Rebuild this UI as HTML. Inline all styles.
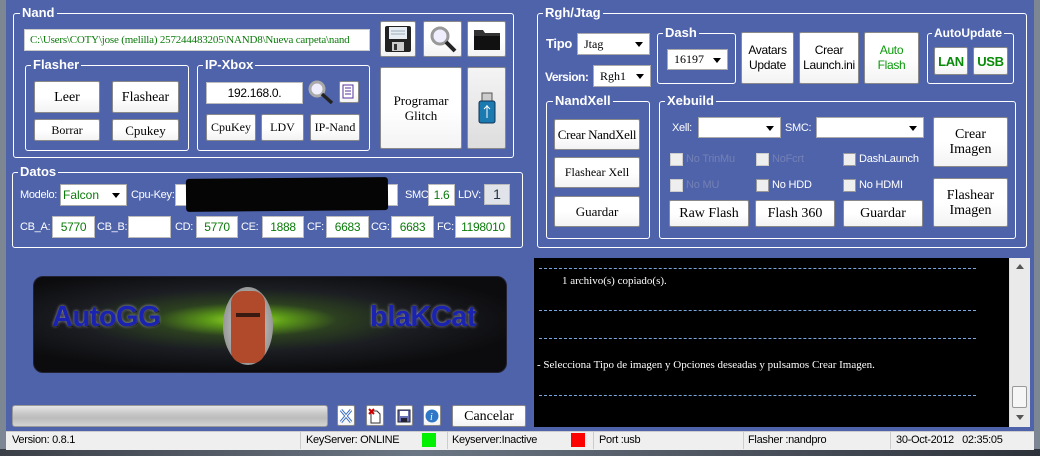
<!DOCTYPE html>
<html><head><meta charset="utf-8"><style>
*{box-sizing:border-box;margin:0;padding:0}
body{width:1040px;height:456px;overflow:hidden;background:#7d8794;position:relative;font-family:"Liberation Sans",sans-serif;font-size:12px}
.a{position:absolute}
.g{position:absolute;border:1px solid #fff;border-radius:3px}
.gl{position:absolute;color:#fff;font-weight:bold;font-size:13px;background:#4f63ab;padding:0 2px;line-height:14px}
.b{position:absolute;background:linear-gradient(#fff,#fff 50%,#f3f3f3);border:1px solid #8a8a8a;border-radius:2px;display:flex;align-items:center;justify-content:center;text-align:center;font-family:"Liberation Serif",serif;font-size:13px;color:#000;line-height:15px}
.s{font-family:"Liberation Sans",sans-serif;letter-spacing:-0.3px}
.i{position:absolute;background:#fff;border:1px solid #bbb;color:#0a7a0a;font-size:12px;letter-spacing:-0.3px;display:flex;align-items:center;justify-content:center}
.l{position:absolute;color:#fff;font-size:11px;letter-spacing:-0.3px;line-height:14px}
.sel{position:absolute;background:#fff;border:1px solid #aaa;font-size:12px;padding-left:6px;display:flex;align-items:center}
.sel:after{content:"";position:absolute;right:6px;top:50%;margin-top:-2px;border:4px solid transparent;border-top:5px solid #000;border-bottom:0}
.cb{position:absolute;width:13px;height:13px;background:#eee;border:1px solid #999}
.cl{position:absolute;font-size:11px;letter-spacing:-0.2px;line-height:14px}
.st{position:absolute;top:432px;font-size:11px;letter-spacing:-0.3px;line-height:17px;color:#000}
.dl{position:absolute;left:5px;width:437px;border-top:1px dashed #7aa8e0}
</style></head><body>
<div class="a" style="left:6px;top:0;width:1028px;height:431px;background:#4f63ab"></div>
<div class="a" style="left:0;top:449px;width:1040px;height:7px;background:linear-gradient(90deg,#3b3f47,#6b7684 40%,#2e323a)"></div>

<!-- Nand -->
<div class="g" style="left:13px;top:13px;width:501px;height:145px"></div>
<div class="gl" style="left:20px;top:6px">Nand</div>
<div class="a" style="left:24px;top:29px;width:346px;height:22px;background:#fff;border:1px solid #ccc;font-family:'Liberation Serif',serif;color:#0a7a0a;font-size:11px;letter-spacing:-0.2px;line-height:20px;padding-left:5px;white-space:nowrap;overflow:hidden">C:\Users\COTY\jose (melilla) 257244483205\NAND8\Nueva carpeta\nand</div>
<div class="b" style="left:380px;top:21px;width:36px;height:36px">
<svg width="28" height="28" viewBox="0 0 28 28"><rect x="1" y="1" width="26" height="26" rx="2" fill="#222"/><rect x="5" y="2" width="18" height="12" fill="#e8edf3"/><line x1="7" y1="6" x2="21" y2="6" stroke="#9ab"/><line x1="7" y1="9" x2="21" y2="9" stroke="#9ab"/><rect x="8" y="17" width="12" height="9" fill="#ccc"/><rect x="10" y="19" width="3" height="6" fill="#333"/></svg></div>
<div class="b" style="left:423px;top:21px;width:39px;height:36px">
<svg width="30" height="30" viewBox="0 0 30 30"><circle cx="12" cy="12" r="8" fill="#eef" stroke="#999" stroke-width="3"/><line x1="18" y1="18" x2="27" y2="27" stroke="#222" stroke-width="4"/></svg></div>
<div class="b" style="left:467px;top:21px;width:39px;height:36px">
<svg width="30" height="26" viewBox="0 0 30 26"><path d="M2 4h9l2 3h15v17H2z" fill="#333"/><path d="M2 10h26v14H2z" fill="#111"/></svg></div>

<div class="g" style="left:25px;top:65px;width:164px;height:86px"></div>
<div class="gl" style="left:31px;top:58px">Flasher</div>
<div class="b" style="left:34px;top:81px;width:66px;height:32px;font-size:14px">Leer</div>
<div class="b" style="left:112px;top:81px;width:67px;height:32px;font-size:14px">Flashear</div>
<div class="b" style="left:34px;top:119px;width:66px;height:22px;font-size:12px">Borrar</div>
<div class="b" style="left:112px;top:119px;width:67px;height:22px">Cpukey</div>

<div class="g" style="left:197px;top:65px;width:173px;height:86px"></div>
<div class="gl" style="left:203px;top:58px">IP-Xbox</div>
<div class="i" style="left:206px;top:82px;width:97px;height:22px;color:#000;font-size:12px">192.168.0.</div>
<svg class="a" style="left:307px;top:79px" width="27" height="26" viewBox="0 0 27 26"><circle cx="10" cy="10" r="7" fill="#eef" stroke="#aaa" stroke-width="3"/><line x1="15" y1="15" x2="25" y2="24" stroke="#222" stroke-width="3.5"/></svg>
<div class="b" style="left:339px;top:81px;width:20px;height:22px"><svg width="14" height="16" viewBox="0 0 14 16"><rect x="1" y="1" width="10" height="13" fill="#fff" stroke="#539"/><path d="M3 4h6M3 7h6M3 10h6" stroke="#539"/></svg></div>
<div class="b" style="left:206px;top:114px;width:50px;height:27px;font-size:12px">CpuKey</div>
<div class="b" style="left:261px;top:114px;width:43px;height:27px;font-size:12px">LDV</div>
<div class="b" style="left:310px;top:114px;width:50px;height:27px;font-size:12px">IP-Nand</div>

<div class="b" style="left:380px;top:67px;width:82px;height:82px">Programar<br>Glitch</div>
<div class="b" style="left:467px;top:67px;width:39px;height:82px;background:linear-gradient(#f4f4f4,#ddd)"><svg width="18" height="34" viewBox="0 0 18 34"><rect x="4" y="2" width="10" height="9" fill="#ccc" stroke="#555"/><rect x="1" y="10" width="16" height="22" rx="2" fill="#1b7ab0" stroke="#135"/><path d="M9 14v13M6 18l3-3 3 3" stroke="#fff" fill="none"/></svg></div>

<!-- Datos -->
<div class="g" style="left:12px;top:172px;width:511px;height:76px"></div>
<div class="gl" style="left:18px;top:165px">Datos</div>
<div class="l" style="left:20px;top:188px">Modelo:</div>
<div class="sel" style="left:60px;top:184px;width:67px;height:22px;color:#0a7a0a;font-size:12px;padding-left:2px">Falcon</div>
<div class="l" style="left:131px;top:188px">Cpu-Key:</div>
<div class="i" style="left:175px;top:184px;width:223px;height:22px"></div>
<div class="a" style="left:186px;top:178px;width:202px;height:33px;background:#050505;border-radius:3px;transform:rotate(-0.5deg)"></div>
<div class="l" style="left:405px;top:188px">SMC:</div>
<div class="i" style="left:428px;top:184px;width:27px;height:22px">1.6</div>
<div class="l" style="left:458px;top:188px">LDV:</div>
<div class="a" style="left:484px;top:184px;width:26px;height:21px;background:#e0e4ea;border:1px solid #bbb;color:#234;text-align:center;font-size:14px;line-height:19px">1</div>
<div class="l" style="left:20px;top:220px">CB_A:</div>
<div class="i" style="left:52px;top:216px;width:43px;height:22px">5770</div>
<div class="l" style="left:97px;top:220px">CB_B:</div>
<div class="i" style="left:128px;top:216px;width:43px;height:22px"></div>
<div class="l" style="left:175px;top:220px">CD:</div>
<div class="i" style="left:196px;top:216px;width:42px;height:22px">5770</div>
<div class="l" style="left:241px;top:220px">CE:</div>
<div class="i" style="left:262px;top:216px;width:42px;height:22px">1888</div>
<div class="l" style="left:307px;top:220px">CF:</div>
<div class="i" style="left:326px;top:216px;width:43px;height:22px">6683</div>
<div class="l" style="left:371px;top:220px">CG:</div>
<div class="i" style="left:391px;top:216px;width:43px;height:22px">6683</div>
<div class="l" style="left:437px;top:220px">FC:</div>
<div class="i" style="left:455px;top:216px;width:56px;height:22px">1198010</div>

<!-- Rgh/Jtag -->
<div class="g" style="left:537px;top:13px;width:490px;height:235px"></div>
<div class="gl" style="left:543px;top:6px">Rgh/Jtag</div>
<div class="l" style="left:546px;top:37px;font-weight:bold;font-size:13px">Tipo</div>
<div class="sel" style="left:577px;top:33px;width:73px;height:22px;font-family:'Liberation Serif',serif">Jtag</div>
<div class="l" style="left:545px;top:70px;font-weight:bold;font-size:12px;letter-spacing:-0.5px">Version:</div>
<div class="sel" style="left:593px;top:65px;width:58px;height:22px;font-family:'Liberation Serif',serif">Rgh1</div>

<div class="g" style="left:657px;top:33px;width:79px;height:51px"></div>
<div class="gl" style="left:663px;top:26px">Dash</div>
<div class="sel" style="left:667px;top:49px;width:61px;height:21px;font-family:'Liberation Serif',serif">16197</div>
<div class="b s" style="left:741px;top:32px;width:53px;height:52px;font-size:12px">Avatars<br>Update</div>
<div class="b s" style="left:799px;top:32px;width:60px;height:52px;font-size:12px">Crear<br>Launch.ini</div>
<div class="b s" style="left:864px;top:32px;width:55px;height:52px;font-size:12px;color:#0a9a0a">Auto<br>Flash</div>

<div class="g" style="left:927px;top:33px;width:87px;height:51px"></div>
<div class="gl" style="left:932px;top:26px;font-size:12px">AutoUpdate</div>
<div class="b s" style="left:934px;top:47px;width:34px;height:28px;color:#0a8a0a;font-weight:bold;font-size:13px">LAN</div>
<div class="b s" style="left:973px;top:47px;width:35px;height:28px;color:#0a8a0a;font-weight:bold;font-size:13px">USB</div>

<div class="g" style="left:546px;top:101px;width:104px;height:138px"></div>
<div class="gl" style="left:553px;top:94px">NandXell</div>
<div class="b" style="left:554px;top:119px;width:86px;height:31px;letter-spacing:-0.3px">Crear NandXell</div>
<div class="b" style="left:554px;top:157px;width:86px;height:31px;font-size:12px">Flashear Xell</div>
<div class="b" style="left:554px;top:196px;width:86px;height:31px">Guardar</div>

<div class="g" style="left:659px;top:101px;width:357px;height:138px"></div>
<div class="gl" style="left:665px;top:94px">Xebuild</div>
<div class="l" style="left:672px;top:121px">Xell:</div>
<div class="sel" style="left:698px;top:117px;width:83px;height:21px"></div>
<div class="l" style="left:785px;top:121px">SMC:</div>
<div class="sel" style="left:816px;top:117px;width:108px;height:21px"></div>
<div class="b" style="left:933px;top:117px;width:75px;height:50px;font-size:14px">Crear<br>Imagen</div>
<div class="b" style="left:933px;top:178px;width:75px;height:49px;font-size:14px">Flashear<br>Imagen</div>
<div class="cb" style="left:670px;top:153px;border-color:#ccc"></div><div class="cl" style="left:686px;top:152px;color:#7480b5">No TrinMu</div>
<div class="cb" style="left:756px;top:153px;border-color:#ccc"></div><div class="cl" style="left:772px;top:152px;color:#7480b5">NoFcrt</div>
<div class="cb" style="left:843px;top:153px"></div><div class="cl" style="left:859px;top:152px;color:#fff">DashLaunch</div>
<div class="cb" style="left:670px;top:179px;border-color:#ccc"></div><div class="cl" style="left:686px;top:178px;color:#7480b5">No MU</div>
<div class="cb" style="left:756px;top:179px"></div><div class="cl" style="left:772px;top:178px;color:#fff">No HDD</div>
<div class="cb" style="left:843px;top:179px"></div><div class="cl" style="left:859px;top:178px;color:#fff">No HDMI</div>
<div class="b" style="left:669px;top:200px;width:80px;height:27px;font-size:14px">Raw Flash</div>
<div class="b" style="left:755px;top:200px;width:80px;height:27px;font-size:14px">Flash 360</div>
<div class="b" style="left:843px;top:200px;width:80px;height:27px;font-size:14px">Guardar</div>

<!-- Logo -->
<div class="a" style="left:33px;top:276px;width:474px;height:97px;border-radius:10px;border:1px solid #223;background:radial-gradient(ellipse 60% 55% at 45% 45%,#a4e030 0%,#5c9a18 14%,#2c4020 32%,#1b1d22 60%,#0c0c0e 100%);overflow:hidden">
<div class="a" style="left:189px;top:10px;width:50px;height:78px;border-radius:50%;background:radial-gradient(#ddd,#999 70%,#555)"></div>
<div class="a" style="left:197px;top:14px;width:34px;height:72px;border-radius:12px;background:#b04a2a"></div>
<div class="a" style="left:202px;top:36px;width:24px;height:4px;background:#3a1a10"></div>
<div class="a" style="left:18px;top:24px;font-size:29px;font-weight:bold;color:#1a22b0;letter-spacing:-0.5px;text-shadow:0 0 3px #aab,1px 1px 0 #000">AutoGG</div>
<div class="a" style="left:336px;top:24px;font-size:29px;font-weight:bold;color:#1a22b0;letter-spacing:-0.5px;text-shadow:0 0 3px #aab,1px 1px 0 #000">blaKCat</div>
</div>

<!-- Console -->
<div class="a" style="left:534px;top:258px;width:476px;height:169px;background:#000;font-family:'Liberation Serif',serif;color:#fff;font-size:11px">
<div class="dl" style="top:10px"></div>
<div class="a" style="left:28px;top:17px">1 archivo(s) copiado(s).</div>
<div class="dl" style="top:52px"></div>
<div class="dl" style="top:80px"></div>
<div class="a" style="left:3px;top:101px">- Selecciona Tipo de imagen y Opciones deseadas y pulsamos Crear Imagen.</div>
<div class="dl" style="top:137px"></div>
</div>
<div class="a" style="left:1009px;top:258px;width:21px;height:169px;background:#eaeaea;border-left:1px solid #ddd">
<div class="a" style="left:6px;top:6px;border:4px solid transparent;border-bottom:5px solid #555;border-top:0"></div>
<div class="a" style="left:2px;top:128px;width:15px;height:22px;background:#f6f6f6;border:1px solid #999;border-radius:2px"></div>
<div class="a" style="left:6px;top:157px;border:4px solid transparent;border-top:5px solid #555;border-bottom:0"></div>
</div>

<!-- bottom controls -->
<div class="a" style="left:12px;top:405px;width:316px;height:22px;border:1px solid #999;border-radius:3px;background:linear-gradient(#e6e6e6,#c6c6c6 40%,#bcbcbc 60%,#d4d4d4)"></div>
<div class="b" style="left:337px;top:405px;width:18px;height:21px"><svg width="14" height="16" viewBox="0 0 14 16"><path d="M2 2l10 12M12 2L2 14" stroke="#3a6cc0" stroke-width="3"/><path d="M2 2l10 12M12 2L2 14" stroke="#fff" stroke-width="1"/></svg></div>
<div class="b" style="left:366px;top:405px;width:18px;height:21px"><svg width="14" height="16" viewBox="0 0 14 16"><path d="M3 3h6l3 3v9H3z" fill="#fff" stroke="#333"/><path d="M1 1l5 5M6 1L1 6" stroke="#c00" stroke-width="2"/></svg></div>
<div class="b" style="left:395px;top:405px;width:18px;height:21px"><svg width="14" height="16" viewBox="0 0 14 16"><rect x="1" y="2" width="12" height="12" fill="#6a73b8" stroke="#223"/><rect x="3" y="3" width="8" height="5" fill="#fff"/><rect x="4" y="10" width="6" height="4" fill="#223"/></svg></div>
<div class="b" style="left:423px;top:405px;width:18px;height:21px"><svg width="14" height="14" viewBox="0 0 14 14"><circle cx="7" cy="7" r="6.5" fill="#2f78c8"/><text x="5" y="11" font-size="10" fill="#fff" font-style="italic" font-family="Liberation Serif">i</text></svg></div>
<div class="b" style="left:452px;top:405px;width:74px;height:22px;font-size:14px">Cancelar</div>

<!-- status -->
<div class="a" style="left:6px;top:431px;width:1028px;height:19px;background:#efefef;border-top:1px solid #ccc"></div>
<div class="st" style="left:12px">Version: 0.8.1</div>
<div class="a" style="left:300px;top:432px;width:1px;height:17px;background:#ccc"></div>
<div class="st" style="left:306px">KeyServer: ONLINE</div>
<div class="a" style="left:422px;top:433px;width:14px;height:14px;background:#00f000"></div>
<div class="a" style="left:447px;top:432px;width:1px;height:17px;background:#ccc"></div>
<div class="st" style="left:452px">Keyserver:Inactive</div>
<div class="a" style="left:571px;top:433px;width:14px;height:14px;background:#f00"></div>
<div class="a" style="left:593px;top:432px;width:1px;height:17px;background:#ccc"></div>
<div class="st" style="left:599px">Port :usb</div>
<div class="a" style="left:743px;top:432px;width:1px;height:17px;background:#ccc"></div>
<div class="st" style="left:748px">Flasher :nandpro</div>
<div class="a" style="left:890px;top:432px;width:1px;height:17px;background:#ccc"></div>
<div class="st" style="left:896px">30-Oct-2012&nbsp;&nbsp; 02:35:05</div>
</body></html>
